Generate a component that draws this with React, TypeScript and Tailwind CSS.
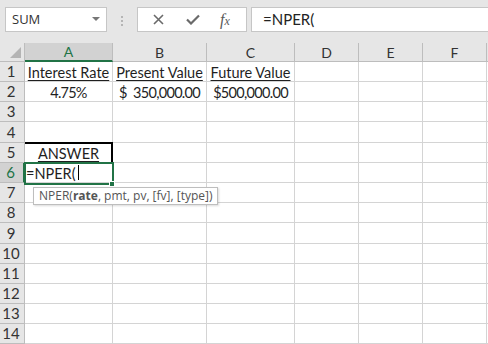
import React from "react";

const cols = ["A", "B", "C", "D", "E", "F"];
const colWidths = [88, 94, 88, 64, 64, 64];
const rowHeights = [20, 20, 20, 21, 20, 20, 20, 20, 21, 20, 20, 20, 20, 20];

const cellFont = { fontFamily: "Lato, 'Liberation Sans', sans-serif" };

function cellContent(r: number, c: number): React.ReactNode {
  if (r === 1 && c === 0) return <span className="w-full text-center underline underline-offset-2">Interest Rate</span>;
  if (r === 1 && c === 1) return <span className="w-full text-center underline underline-offset-2">Present Value</span>;
  if (r === 1 && c === 2) return <span className="w-full text-center underline underline-offset-2">Future Value</span>;
  if (r === 2 && c === 0) return <span className="w-full text-center tracking-[-0.8px]">4.75%</span>;
  if (r === 2 && c === 1)
    return (
      <span className="flex w-full justify-between pl-[6px] pr-[6px] tracking-[-0.7px]">
        <span>$</span>
        <span>350,000.00</span>
      </span>
    );
  if (r === 2 && c === 2) return <span className="w-full text-center tracking-[-0.7px]">$500,000.00</span>;
  if (r === 5 && c === 0) return <span className="w-full text-center underline underline-offset-2">ANSWER</span>;
  if (r === 6 && c === 0)
    return (
      <span className="flex items-end pl-[1px]">
        =NPER(
        <span className="ml-[2px] mb-[2px] h-[15px] w-px bg-black" />
      </span>
    );
  return null;
}

export default function App() {
  return (
    <div className="relative h-[344px] w-[488px] overflow-hidden bg-white text-[#1f1f1f]">
      {/* formula bar */}
      <div className="flex h-[43px] items-start bg-[#e6e6e6] pt-[7px]" style={{ fontFamily: "'Open Sans', 'Noto Sans', sans-serif" }}>
        <div className="ml-[5px] flex h-[25px] w-[102px] items-center justify-between border border-[#c6c6c6] bg-white pl-[6px] pr-[6px] text-[13px] text-[#333]">
          <span>SUM</span>
          <svg width="8" height="5" viewBox="0 0 8 5">
            <path d="M0 0 L8 0 L4 4 Z" fill="#777" />
          </svg>
        </div>
        <div className="flex w-[30px] flex-col items-center gap-[2px] pt-[9px]">
          <span className="h-[2px] w-[2px] bg-[#b5b5b5]" />
          <span className="h-[2px] w-[2px] bg-[#b5b5b5]" />
          <span className="h-[2px] w-[2px] bg-[#b5b5b5]" />
        </div>
        <div className="flex h-[25px] w-[110px] items-center border border-[#c6c6c6] bg-white">
          <svg className="ml-[15px]" width="11" height="11" viewBox="0 0 11 11">
            <path d="M1 1 L10 10 M10 1 L1 10" stroke="#6a6a6a" strokeWidth="1.6" />
          </svg>
          <svg className="ml-[22px]" width="14" height="11" viewBox="0 0 14 11">
            <path d="M1 5.5 L5 9.5 L13 1.5" stroke="#6a6a6a" strokeWidth="2.2" fill="none" />
          </svg>
          <span
            className="ml-[20px] text-[16px] italic text-[#5a5a5a]"
            style={{ fontFamily: "'Liberation Serif', serif" }}
          >
            f<span className="text-[12px]">x</span>
          </span>
        </div>
        <div
          className="ml-[4px] flex h-[25px] flex-1 items-center border border-r-0 border-[#c6c6c6] bg-white pl-[11px] text-[15px] text-[#222]"
          style={cellFont}
        >
          =NPER(
        </div>
      </div>

      {/* grid */}
      <div
        className="grid text-[14.5px]"
        style={{
          ...cellFont,
          gridTemplateColumns: `25px ${colWidths.map((w) => `${w}px`).join(" ")} 1fr`,
          gridTemplateRows: `19px ${rowHeights.map((h) => `${h}px`).join(" ")}`,
        }}
      >
        {/* header row */}
        <div className="relative border-r border-b border-[#bdbdbd] bg-[#e6e6e6]">
          <svg className="absolute bottom-[3px] right-[3px]" width="11" height="11" viewBox="0 0 11 11">
            <path d="M11 0 L11 11 L0 11 Z" fill="#b4b4b4" />
          </svg>
        </div>
        {cols.map((c, i) => (
          <div
            key={c}
            className={
              i === 0
                ? "flex items-center justify-center border-r border-b-2 border-r-[#bdbdbd] border-b-[#217346] bg-[#d2d2d2] text-[14px] text-[#217346]"
                : "flex items-center justify-center border-r border-b border-[#bdbdbd] bg-[#e6e6e6] text-[14px] text-[#333]"
            }
          >
            {c}
          </div>
        ))}
        <div className="border-b border-[#bdbdbd] bg-[#e6e6e6]" />

        {rowHeights.map((_, ri) => {
          const r = ri + 1;
          return (
            <React.Fragment key={r}>
              <div
                className={
                  r === 6
                    ? "flex items-center justify-center border-r-2 border-b border-r-[#217346] border-b-[#bdbdbd] bg-[#d2d2d2] pr-[2px] text-[15px] text-[#217346]"
                    : "flex items-center justify-center border-r border-b border-[#bdbdbd] bg-[#e6e6e6] pr-[2px] text-[15px] text-[#333]"
                }
              >
                {r}
              </div>
              {cols.map((c, ci) => (
                <div key={c} className="flex items-end overflow-visible whitespace-nowrap border-r border-b border-[#d4d4d4] leading-[17px]">
                  {cellContent(r, ci)}
                </div>
              ))}
              <div className="border-b border-[#d4d4d4]" />
            </React.Fragment>
          );
        })}
      </div>

      {/* A5 outline */}
      <div className="pointer-events-none absolute left-[25px] top-[142px] h-[22px] w-[88px] border-t-2 border-r-2 border-black" />
      {/* A6 active cell */}
      <div className="pointer-events-none absolute left-[24px] top-[162px] h-[23px] w-[90px] border-2 border-[#217346]" />
      <div className="pointer-events-none absolute left-[109px] top-[181px] h-[6px] w-[6px] border border-white bg-[#217346]" />

      {/* function tooltip */}
      <div
        className="absolute left-[33px] top-[187px] flex h-[18px] items-center border border-[#bebebe] bg-white px-[5px] text-[12px] text-[#555] shadow-[1px_1px_2px_rgba(0,0,0,0.15)]"
        style={{ fontFamily: "'Open Sans', 'Noto Sans', sans-serif" }}
      >
        NPER(<span className="font-bold">rate</span>, pmt, pv, [fv], [type])
      </div>
    </div>
  );
}
